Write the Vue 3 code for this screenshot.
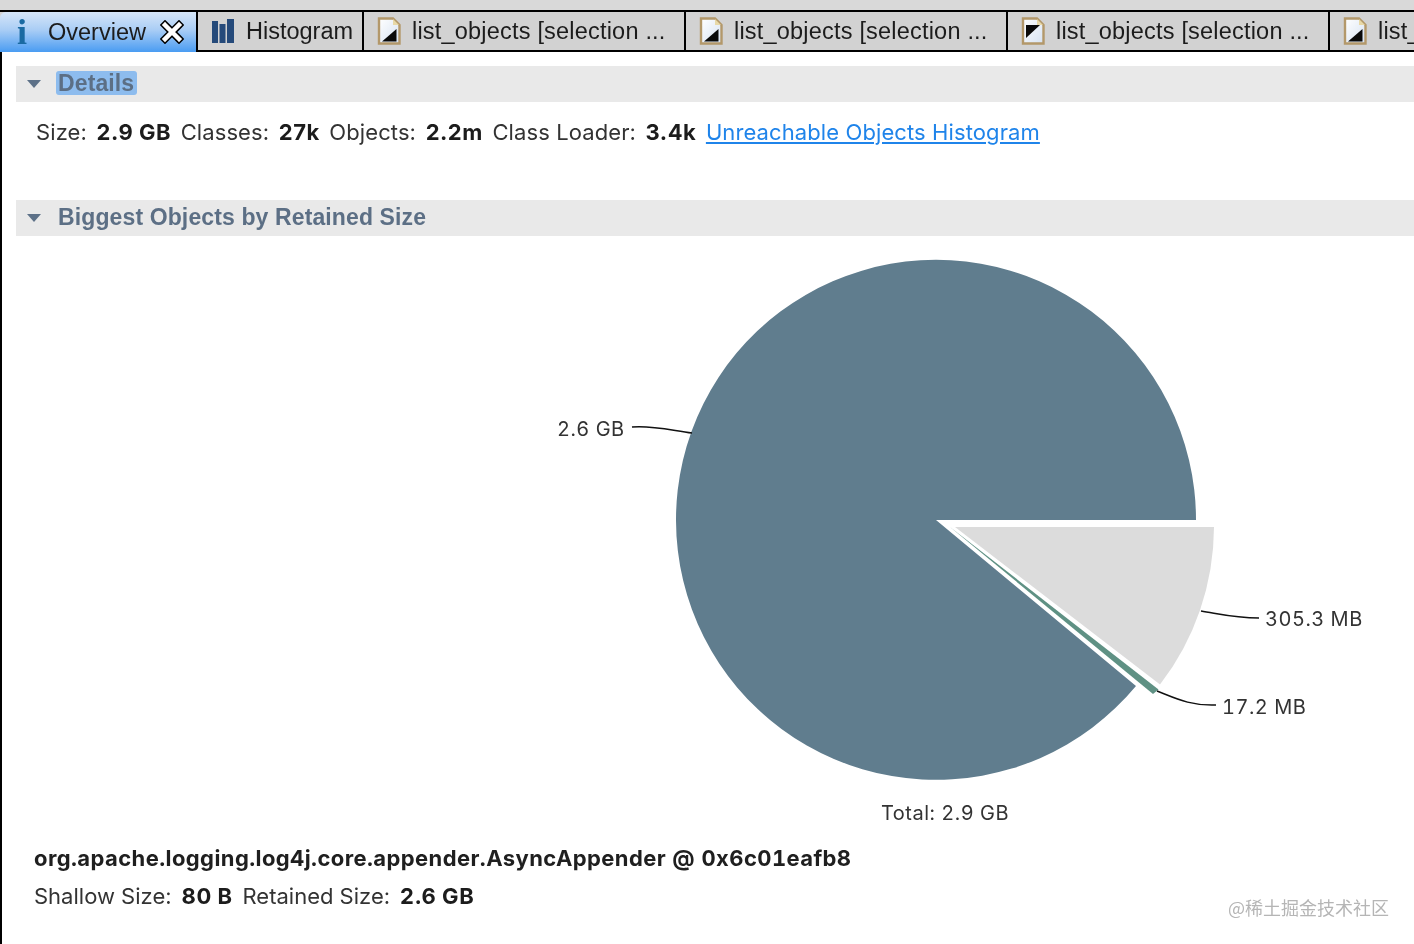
<script setup>
const tabs = [
  { flip: false },
  { flip: false },
  { flip: true },
  { flip: false, cut: true }
]
</script>

<template>
  <div class="app">
    <div class="strip"></div>
    <div class="tabbar">
      <div class="tab active">
        <span class="info">i</span>
        <span class="tab-label">Overview</span>
        <svg class="close" width="24" height="24" viewBox="0 0 24 24">
          <path d="M5 5 L19 19 M19 5 L5 19" stroke="#000" stroke-width="7.500" stroke-linecap="square" fill="none" />
          <path d="M5 5 L19 19 M19 5 L5 19" stroke="#fff" stroke-width="4.500" stroke-linecap="square" fill="none" />
        </svg>
      </div>
      <div class="tab hist">
        <svg class="bars" width="24" height="26" viewBox="0 0 24 26">
          <rect x="1" y="3" width="6" height="22" fill="#254a7a" />
          <rect x="8.5" y="6" width="6" height="19" fill="#254a7a" />
          <rect x="16" y="1" width="7" height="24" fill="#254a7a" />
        </svg>
        <span class="tab-label">Histogram</span>
      </div>
      <div v-for="(t, i) in tabs" :key="i" class="tab doc" :class="{ cut: t.cut }">
        <svg class="docicon" width="24" height="28" viewBox="0 0 24 28">
          <defs>
            <linearGradient :id="'g' + i" x1="0" y1="0" x2="1" y2="1">
              <stop offset="0" stop-color="#ffffff" />
              <stop offset="1" stop-color="#d6e2f2" />
            </linearGradient>
          </defs>
          <path d="M2 1.500 H16 L22.500 8 V26.500 H2 Z" :fill="'url(#g' + i + ')'" stroke="#b3986a" stroke-width="2.400" />
          <path d="M16 2 V8 H22 Z" fill="#e8d9a8" />
          <path v-if="!t.flip" d="M5 24.500 L19.500 12 V24.500 Z" fill="#0a0a0a" />
          <path v-else d="M5 8 H19 L5 21 Z" fill="#0a0a0a" />
        </svg>
        <span class="tab-label list">{{ t.cut ? 'list_' : 'list_objects [selection ...' }}</span>
      </div>
    </div>

    <main class="main">
      <header class="section first">
        <span class="caret"></span>
        <span class="section-title selected">Details</span>
      </header>
      <div class="stats">
        <span>Size:</span><b>2.9 GB</b>
        <span>Classes:</span><b>27k</b>
        <span>Objects:</span><b>2.2m</b>
        <span>Class Loader:</span><b>3.4k</b>
        <a class="link">Unreachable Objects Histogram</a>
      </div>

      <header class="section second">
        <span class="caret"></span>
        <span class="section-title">Biggest Objects by Retained Size</span>
      </header>

      <svg class="chart" width="1412" height="592" viewBox="2 236 1412 592">
        <path d="M936 520 L1196 520 A260 260 0 1 0 1136 686 Z" fill="#607d8e" />
        <path d="M955 527 L1214 527 A259 259 0 0 1 1160 684.500 Z" fill="#dcdcdc" />
        <path d="M950 527 L1158.500 689.500 L1153 694 Z" fill="#5f9184" />

        <path d="M632 427 C650 425 670 430 692 433" fill="none" stroke="#111" stroke-width="1.500" />
        <path d="M1201 611 C1220 614 1235 618 1259 618" fill="none" stroke="#111" stroke-width="1.500" />
        <path d="M1157 691 C1175 698 1190 706 1216 705" fill="none" stroke="#111" stroke-width="1.500" />

        <text x="557" y="436" class="lbl">2.6 GB</text>
        <text x="1265" y="626" class="lbl">305.3 MB</text>
        <text x="1222" y="714" class="lbl">17.2 MB</text>
        <text x="881" y="820" class="lbl">Total: 2.9 GB</text>
      </svg>

      <div class="object">org.apache.logging.log4j.core.appender.AsyncAppender @ 0x6c01eafb8</div>
      <div class="sizes">
        <span>Shallow Size:</span><b>80 B</b>
        <span>Retained Size:</span><b>2.6 GB</b>
      </div>
    </main>

    <div class="watermark">@稀土掘金技术社区</div>
  </div>
</template>

<style scoped>
.app {
  position: relative;
  width: 1414px;
  height: 944px;
  overflow: hidden;
  display: flex;
  flex-direction: column;
  background: #fff;
  font-family: Inter, "Liberation Sans", sans-serif;
  color: #222;
  filter: blur(0.4px);
}
.strip {
  height: 10px;
  background: #d9d9d9;
}
.tabbar {
  height: 42px;
  display: flex;
  box-sizing: border-box;
  border-top: 2px solid #000;
  background: #d2d2d2;
  overflow: hidden;
}
.tab {
  flex: none;
  box-sizing: border-box;
  height: 40px;
  display: flex;
  align-items: center;
  border-right: 2px solid #000;
  border-bottom: 2px solid #000;
  white-space: nowrap;
}
.tab-label {
  font-family: "Liberation Sans", Arial, sans-serif;
  font-size: 23.500px;
  color: #1c1c1c;
  padding-top: 1px;
}
.list {
  letter-spacing: 0.200px;
}
.active {
  width: 198px;
  border-bottom: none;
  border-top-left-radius: 6px;
  background: linear-gradient(#d6e6f8 0%, #a9cdf5 45%, #4a9cf2 100%);
}
.info {
  width: 16px;
  margin-left: 14px;
  margin-right: 18px;
  font-family: "Liberation Serif", serif;
  font-weight: 700;
  font-size: 36px;
  line-height: 34px;
  color: #1a6aa2;
  text-align: center;
}
.close {
  margin-left: 14px;
}
.hist {
  width: 166px;
}
.bars {
  margin-left: 13px;
  margin-right: 11px;
}
.doc {
  width: 322px;
}
.doc .docicon {
  margin-left: 13px;
  margin-right: 11px;
}
.doc.cut {
  flex: 1;
  border-right: none;
}
.main {
  flex: 1;
  border-left: 2px solid #000;
  display: flex;
  flex-direction: column;
}
.section {
  height: 36px;
  margin-left: 14px;
  background: #e9e9e9;
  display: flex;
  align-items: center;
  flex: none;
}
.first {
  margin-top: 14px;
}
.second {
  margin-top: 36px;
}
.caret {
  width: 0;
  height: 0;
  margin-left: 11px;
  border-left: 7.500px solid transparent;
  border-right: 7.500px solid transparent;
  border-top: 8px solid #5d7188;
}
.section-title {
  margin-left: 15px;
  margin-top: -2px;
  padding: 0 2px;
  font-family: "Liberation Sans", Arial, sans-serif;
  font-size: 23px;
  font-weight: 700;
  letter-spacing: 0.120px;
  color: #5c6f85;
}
.selected {
  background: #8dbcee;
  border-radius: 3px;
  line-height: 24px;
  padding-right: 3px;
}
.stats {
  height: 60px;
  margin-bottom: 2px;
  margin-left: 34px;
  display: flex;
  align-items: center;
  gap: 9.600px;
  font-size: 22px;
  letter-spacing: 0.100px;
  white-space: nowrap;
}
.stats span,
.sizes span {
  color: #333;
}
.stats b,
.sizes b {
  color: #1c1c1c;
  letter-spacing: 0.500px;
}
.link {
  color: #1f84ea;
  text-decoration: underline;
}
.chart {
  display: block;
  flex: none;
}
.lbl {
  font-family: Inter, "Liberation Sans", sans-serif;
  font-size: 20px;
  letter-spacing: 0.500px;
  font-variant-numeric: tabular-nums;
  fill: #333;
}
.object {
  margin-left: 32px;
  margin-top: 16px;
  font-size: 22px;
  font-weight: 700;
  letter-spacing: 0.410px;
  font-variant-numeric: tabular-nums;
  color: #1f1f1f;
  line-height: 28px;
}
.sizes {
  margin-left: 32px;
  margin-top: 10px;
  display: flex;
  gap: 10px;
  font-size: 22px;
  line-height: 28px;
}
.watermark {
  position: absolute;
  left: 1228px;
  top: 895px;
  font-family: "Noto Sans CJK SC", sans-serif;
  font-size: 18px;
  line-height: 24px;
  color: #b5b5b5;
}
</style>

<style>
html, body {
  margin: 0;
  overflow: hidden;
}
</style>
